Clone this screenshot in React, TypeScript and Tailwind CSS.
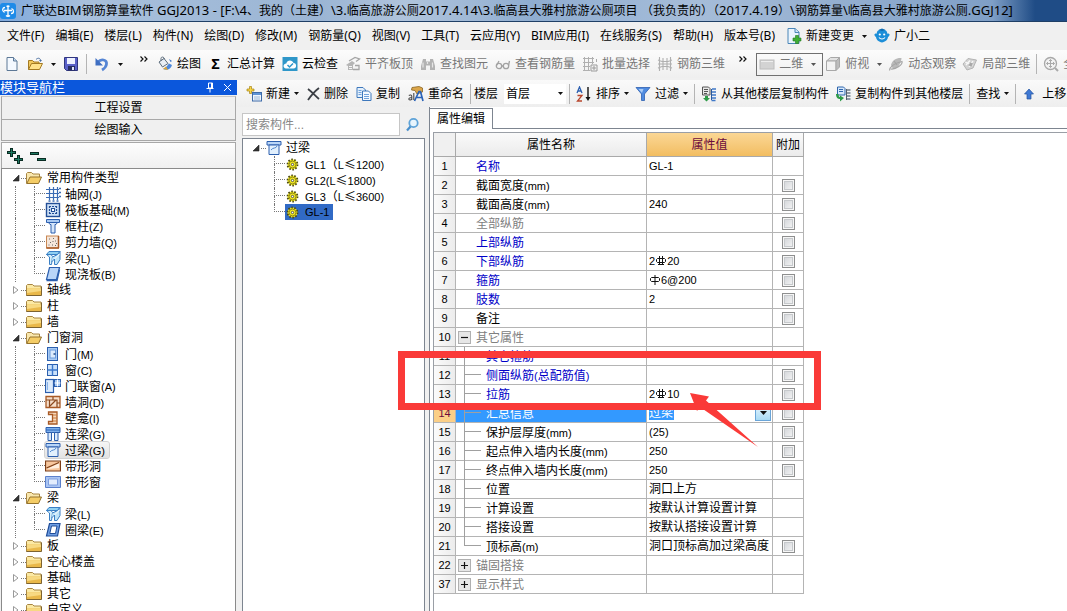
import React, { type ReactNode } from "react";

/* ---------- small building blocks ---------- */

function Mixed({ text, latin = "text-[11px]" }: { text: string; latin?: string }) {
  return (
    <>
      {text.split(/([\x20-\x7e]+)/).map((part, i) =>
        part ? (
          <span key={i} className={i % 2 === 1 ? latin : "[font-family:'Noto_Sans_CJK_SC',sans-serif]"}>
            {part}
          </span>
        ) : null
      )}
    </>
  );
}

function Svg({ children, w = 16, h = 16 }: { children: ReactNode; w?: number; h?: number }) {
  return (
    <svg width={w} height={h} viewBox={`0 0 ${w} ${h}`} className="shrink-0" aria-hidden="true">
      {children}
    </svg>
  );
}

function Caret({ color = "#111" }: { color?: string }) {
  return (
    <Svg w={5} h={3}>
      <path d="M0 0h5L2.5 3z" fill={color} />
    </Svg>
  );
}

function Sep() {
  return <span className="h-5 w-px shrink-0 bg-[#b4b4b4]" />;
}

/* ---------- toolbar icons ---------- */

const AppLogo = () => (
  <Svg>
    <rect width="16" height="16" rx="3" fill="#1e8be8" />
    <path d="M8 2.500v11M4 7.500h8M5 4.500C2.500 4.500 1.500 8 4.500 9.500M11 10.500c3 0 3.500-3.500.5-5M6 12.500c1 1 3 1 4 0M6.500 3.500c1-.8 2-.8 3 0" stroke="#fff" strokeWidth="1.300" fill="none" />
  </Svg>
);
const NewFile = () => (
  <Svg>
    <path d="M3 1.500h6.500l3.500 3.500v9.500H3z" fill="#f4f9ff" stroke="#5d7896" />
    <path d="M9.500 1.500V5H13" fill="#c4d9ef" stroke="#5d7896" />
  </Svg>
);
const OpenFile = () => (
  <Svg>
    <path d="M1.500 13.500V4.500h4l1.500 1.500h5v2" fill="#f2c95d" stroke="#a47a22" />
    <path d="M1.500 13.500L4.500 7.500h11l-3 6z" fill="#ffe28a" stroke="#a47a22" />
    <path d="M9 3.500c2-2 4-1.500 4.500.5" fill="none" stroke="#4a6ea0" />
    <path d="M12 4h3l-1.500 2z" fill="#4a6ea0" />
  </Svg>
);
const Save = () => (
  <Svg>
    <path d="M1.500 1.500h13v13h-11l-2-2z" fill="#5a61c8" stroke="#30367f" />
    <rect x="4" y="2" width="8" height="6" fill="#eef1ff" />
    <rect x="5" y="10" width="7" height="4.500" fill="#272d62" />
    <rect x="9" y="11" width="2" height="3" fill="#dfe3f8" />
  </Svg>
);
const Undo = () => (
  <Svg>
    <path d="M4 6C7 2.500 13 3.500 12.500 8c-.2 2.500-2 4.500-4.500 6" fill="none" stroke="#5585d4" strokeWidth="2.800" />
    <path d="M1.500 2v7.500H9z" fill="#3f6fc2" />
  </Svg>
);
const Paint = () => (
  <Svg>
    <path d="M2 6l5-3.500L11 7.500 5.500 11z" fill="#e8eef4" stroke="#5b6b7b" />
    <path d="M4 5V2.500C4 0.500 7 .5 7.500 3" fill="none" stroke="#5b6b7b" />
    <path d="M6 13c3-1 4-3 6-5.500l3 1.500c-1 4-5 6-9 4z" fill="#4c88dc" />
    <path d="M6 13l3-2.500 2 3.500z" fill="#d8a53c" />
    <path d="M12 3l1.500 3 1.500-1z" fill="#3f73c4" />
  </Svg>
);
const CloudCheck = () => (
  <Svg>
    <rect x=".5" y="1" width="15" height="14" fill="#2f97c9" />
    <path d="M4 12.500c-3.500-.5-3-5 .3-5C5 3.500 10.500 3.500 11.500 7c3.500 0 3.500 5.500 0 5.500z" fill="#fff" />
    <path d="M5.500 9l2 2 3.500-3.500" fill="none" stroke="#2f97c9" strokeWidth="1.500" />
  </Svg>
);
const AlignSlab = () => (
  <Svg>
    <path d="M1 9l6-4 3 2-2 2v5H3v-4z" fill="#b5b5b5" />
    <path d="M4 5l6-3.500L14.500 3 11 5.500M10 9.500h4v4h-6" fill="none" stroke="#a5a5a5" strokeWidth="1.300" />
    <path d="M4 10.500h3M4 12.500h3" stroke="#f5f5f5" />
  </Svg>
);
const Binoculars = () => (
  <Svg>
    <path d="M3 3h3v2.500h4V3h3l2 7v4h-5V9.500H6V14H1v-4z" fill="#b3b3b3" />
    <path d="M3 6.500v5M12.500 6.500v5M7.500 6v2" stroke="#e6e6e6" strokeWidth="1.200" />
  </Svg>
);
const Glasses = () => (
  <Svg>
    <circle cx="4" cy="10" r="2.700" fill="none" stroke="#a3a3a3" strokeWidth="1.300" />
    <circle cx="11" cy="10" r="2.700" fill="none" stroke="#a3a3a3" strokeWidth="1.300" />
    <path d="M6.500 10h2M1.500 9.500L4 5M13.500 9.500L14.500 5" fill="none" stroke="#a3a3a3" strokeWidth="1.300" />
  </Svg>
);
const BatchSelect = () => (
  <Svg>
    <path d="M1 2.500h11M1 6.500h11M1 10.500h7M1 14.500h7M2.500 1v14M6.500 1v14M10.500 1v7" stroke="#b0b0b0" />
    <path d="M9 9h6v6H9zM11 11h2v2h-2z" fill="none" stroke="#999" />
    <path d="M14.500 3v3" stroke="#aaa" />
  </Svg>
);
const Rebar3d = () => (
  <Svg>
    <path d="M1 4l4 1.500h6L15 4M1 8h14M1 12l4-1.500h6l4 1.500M2.500 1v14M6 2v12M10 2v12M13.500 1v14" fill="none" stroke="#b0b0b0" strokeWidth="1.100" />
  </Svg>
);
const Plane2d = () => (
  <Svg>
    <rect x="1" y="4" width="14" height="9" fill="#d3d3d3" stroke="#bcbcbc" />
    <path d="M2 5.500h12" stroke="#eee" />
  </Svg>
);
const Cube = () => (
  <Svg>
    <path d="M1.500 5l4-3.500h9L11 5z" fill="#e2e2e2" stroke="#a8a8a8" />
    <path d="M1.500 5H11v9.500H1.500z" fill="#f2f2f2" stroke="#a8a8a8" />
    <path d="M11 5l3.500-3.500V11L11 14.500z" fill="#bcbcbc" stroke="#a8a8a8" />
  </Svg>
);
const Orbit = () => (
  <Svg>
    <path d="M3 9C4 4 9 1.500 13.500 2 13 8 10 12 5 13z" fill="#b9b9b9" />
    <path d="M1.500 14.500C2 9 8 7 14 5.500c1 3-6 8-11 7.500M6 5l3 4" fill="none" stroke="#a5a5a5" strokeWidth="1.200" />
  </Svg>
);
const Part3d = () => (
  <Svg>
    <path d="M1 8l5-5.500L14.500 4l-3.500 8-6 2z" fill="#d2d2d2" stroke="#b4b4b4" />
    <path d="M4 9l4-4.500M7 11l4-6M3 6l8 3" stroke="#f8f8f8" strokeWidth="1.300" />
    <path d="M8 6.500l3 1-1.500 3-3-1z" fill="#a8a8a8" />
  </Svg>
);
const ZoomAll = () => (
  <Svg>
    <circle cx="7.500" cy="7.500" r="6" fill="#f2f2f2" stroke="#a8a8a8" strokeWidth="1.300" />
    <path d="M7.500 3.500v8M3.500 7.500h8M6 5l1.500-1.500L9 5M6 10l1.500 1.500L9 10M5 6L3.500 7.500 5 9M10 6l1.500 1.500L10 9" fill="none" stroke="#aaa" />
    <path d="M12 12l3 3" stroke="#aaa" strokeWidth="2" />
  </Svg>
);
const NewChange = () => (
  <Svg>
    <path d="M2 .5h7L13 4v11.500H2z" fill="#eaf4fd" stroke="#4b86b8" />
    <path d="M9 .5V4.500h4" fill="#cfe4f5" stroke="#4b86b8" />
    <path d="M9.500 7.500h3v2.500H15v3h-2.500v2.500h-3V13H7v-3h2.500z" fill="#3eae35" stroke="#23781e" strokeWidth=".6" />
  </Svg>
);
const Mascot = () => (
  <Svg>
    <path d="M8 1.500c5 0 5.500 3 5 4 3-.5 3.500 2 1 3.500C13.800 12 11 14 8 14.500 5 14 2.200 12 2 9-.5 7.500 0 5 3 5.500 2.500 4.500 3 1.500 8 1.500z" fill="#1c8ed8" />
    <path d="M4.500 2l3.500 1 3.500-1-3.500-1.500z" fill="#0f6db3" />
    <circle cx="5.800" cy="6.500" r="1.100" fill="#fff" />
    <circle cx="10.200" cy="6.500" r="1.100" fill="#fff" />
    <path d="M5 9.500c1.500 2 4.500 2 6 0" fill="none" stroke="#fff" strokeWidth="1.100" />
  </Svg>
);
const NewItem = () => (
  <Svg>
    <rect x="6.500" y="6.500" width="9" height="8.500" fill="#eef5fd" stroke="#3e6ba8" />
    <rect x="7" y="7" width="8" height="2" fill="#5e93d6" />
    <path d="M8 11h6M8 13h6" stroke="#9db8d8" />
    <path d="M3.500 .5h2v2.500H8v2H5.500V7.500h-2V5H1V3h2.500z" fill="#f8d648" stroke="#a88416" strokeWidth=".7" />
  </Svg>
);
const Cross = () => (
  <Svg w={13} h={14}>
    <path d="M1 2c4 3 7 6.500 11 10M12 1C8 4 4.500 8 1 13" fill="none" stroke="#3b3f45" strokeWidth="1.800" />
  </Svg>
);
const Copy = () => (
  <Svg>
    <path d="M1 1.500h6L9.500 4v7.500H1z" fill="#e4f0fc" stroke="#3e78bc" />
    <path d="M6.500 5h6L15 7.500v7H6.500z" fill="#f3f9ff" stroke="#3e78bc" />
    <path d="M2.500 4.500h3M2.500 6.500h3M2.500 8.500h3M8 8.500h5M8 10.500h5M8 12.500h5" stroke="#6fa2dc" />
  </Svg>
);
const Rename = () => (
  <Svg>
    <path d="M4 1.500l7-1L14.500 2v4L9 8 7 4.500 3.500 4z" fill="#dca64a" stroke="#8a6423" strokeWidth=".8" />
    <path d="M6.500 15l4.500-9.500h1.500L15 15M9 11.500h4.500" fill="none" stroke="#2a63b8" strokeWidth="1.700" />
    <path d="M.8 9.500c1.500-1 3-.5 3 1V14M3.800 11.500C2 11.500.8 12 .8 13s2 1.500 3 0M5.800 7v7" fill="none" stroke="#4a4a4a" strokeWidth="1.100" />
  </Svg>
);
const SortAz = () => (
  <Svg>
    <path d="M1 7L3.500 1 6 7M2 5h3" fill="none" stroke="#2c5fb0" strokeWidth="1.300" />
    <path d="M1.500 9.500H6L1.500 15H6" fill="none" stroke="#b8452d" strokeWidth="1.300" />
    <path d="M12 1v12" stroke="#111" strokeWidth="1.400" />
    <path d="M9.500 11h5L12 15z" fill="#111" />
  </Svg>
);
const Filter = () => (
  <Svg>
    <path d="M1 1.500h14L9.500 8v6.500h-3V8z" fill="#4f8be0" stroke="#2d5fb0" strokeWidth=".8" />
    <path d="M3.500 3h5L7 7z" fill="#a9cbf5" />
  </Svg>
);
const CopyFrom = () => (
  <Svg>
    <path d="M1.500 1h6L9 2.500V9H1.500z" fill="#e8e8e8" stroke="#555" />
    <path d="M3 3.500h4M3 5.500h4M3 7.500h3" stroke="#555" />
    <path d="M11 3h4M11 6h4M11 9h4M11 12h4M10.500 14.500h4" stroke="#3f78c8" strokeWidth="1.600" />
    <path d="M10.500 3v11" stroke="#2b5a9e" />
    <path d="M4 10h3v2h2l-3.500 3.500L2 12h2z" fill="#2e9b48" />
  </Svg>
);
const CopyTo = () => (
  <Svg>
    <path d="M2.500 1h6L10 2.500V9H2.500z" fill="#d7e8fb" stroke="#2f66ad" />
    <path d="M4 3.500h4M4 5.500h4" stroke="#2f66ad" />
    <path d="M12 4h3.500M12 7h3.500M12 10h3.500M12 13h3.500" stroke="#6d7b8b" strokeWidth="1.600" />
    <path d="M11.500 3v11" stroke="#55606c" />
    <path d="M1 8c0 4 2 5 4 5v2.500L9 12 5 9.500V11c-1 0-1.500-1-1.500-3z" fill="#2e9b48" />
  </Svg>
);
const ArrowUp = () => (
  <Svg w={10} h={12}>
    <path d="M5 1l4.500 5H7v5H3V6H.5z" fill="#3f79d4" stroke="#24539f" strokeWidth=".7" />
  </Svg>
);

/* ---------- tree icons ---------- */

const FolderClosed = () => (
  <Svg>
    <path d="M.5 13.500V3.500l1-1h5l1.500 1.500h7v9.500z" fill="#fbe9a4" stroke="#a88643" />
    <path d="M1 6.500h14v7H1z" fill="#e9b84a" />
    <path d="M1 6.500h14v2.500L1 11z" fill="#f7d982" />
    <path d="M.5 13.500h15V4.500" fill="none" stroke="#7d6330" />
  </Svg>
);
const FolderOpen = () => (
  <Svg>
    <path d="M.5 13.500V3.500l1-1h4L7 4h6.500v3" fill="#f9e7ae" stroke="#a88643" />
    <path d="M.8 13.500L4 7h11.500l-3 6.500z" fill="#f4cc66" stroke="#94732f" />
  </Svg>
);
const blue = "#2c5fae";
const brown = "#a95a26";
const AxisGrid = () => (
  <Svg>
    <path d="M4.500 1v13M8.500 1v13M12.500 1v13M1 3.500h13M1 7.500h13M1 11.500h13" stroke="#3b6cb4" strokeWidth="1.200" />
    <path d="M14 2.500h2M14 6.500h2M14 10.500h2M3.500 15h2M7.500 15h2M11.500 15h2" stroke="#3b6cb4" strokeWidth="1.500" />
  </Svg>
);
const Raft = () => (
  <Svg>
    <rect x="1.500" y="1.500" width="13" height="13" fill="#cfe1f7" stroke="#234f97" strokeWidth="1.400" />
    <path d="M4 4.500h8M4 11.500h8M4.500 4v8M11.500 4v8" stroke="#234f97" strokeWidth="1.200" strokeDasharray="2 1" />
    <rect x="6.500" y="6.500" width="3" height="3" fill="#fff" stroke="#234f97" />
  </Svg>
);
const Column = () => (
  <Svg>
    <path d="M1.500 1.500h13v3h-13z" fill="#a9c9f2" stroke={blue} />
    <path d="M3.500 4.500h9l-1.500 2h-1v8.500H6V6.500H5z" fill="#d5e6fb" stroke={blue} />
  </Svg>
);
const ShearWall = () => (
  <Svg>
    <rect x="1.500" y="2" width="12" height="12" fill="#f5e6da" stroke="#c98752" />
    <path d="M13.500 2v12M1.500 14H14" stroke={brown} strokeWidth="1.500" />
    <path d="M4 5h1M8 4.500h1M10 7h1M5 8.500h1M3.500 11h1M7 11h1M10 11.500h1M11 9.500h1M7.500 7.500h1" stroke="#6d6a68" />
  </Svg>
);
const Beam = () => (
  <Svg>
    <path d="M1.500 4.500L4 1.500h11L12.500 4.500z" fill="#8fd0f2" stroke="#3a7fc4" />
    <path d="M1.500 4.500h4.500l1.500 2-1 8H4.500V7z" fill="#d5effb" stroke="#3a7fc4" />
    <path d="M7.500 7l5-2.500L15 1.500v8l-3 5H9.500V9l-3 3" fill="#bfe4f8" stroke="#3a7fc4" />
    <path d="M9.500 9l5-5" stroke="#fff" />
  </Svg>
);
const Slab = () => (
  <Svg>
    <path d="M4.500 1.500h10l-3 12h-10z" fill="#b9d5f8" stroke={blue} strokeWidth="1.200" />
    <path d="M1.500 14.500h10.500l2.500-11" fill="none" stroke={blue} strokeWidth="1.400" />
  </Svg>
);
const Door = () => (
  <Svg>
    <rect x="2.500" y="1.500" width="10" height="13" fill="#a9cbf4" stroke={blue} />
    <rect x="5" y="4" width="5.500" height="8" fill="#dcebfc" stroke="#6a9bdd" />
    <path d="M8.500 8h2" stroke="#173f80" strokeWidth="1.400" />
  </Svg>
);
const Window = () => (
  <Svg>
    <rect x="2.500" y="2.500" width="10" height="11" fill="#cbe2fb" stroke={blue} />
    <path d="M7.500 2.500v11M2.500 8h10" stroke="#3d78cc" strokeWidth="1.400" />
  </Svg>
);
const DoorWindow = () => (
  <Svg>
    <rect x=".5" y="1.500" width="8" height="13" fill="#dcebfc" stroke={blue} strokeWidth="1.200" />
    <rect x="9.500" y="1.500" width="6" height="7" fill="#a9cbf4" stroke={blue} />
    <path d="M12.500 1.500v7M9.500 5h6" stroke="#fff" />
    <path d="M2.500 4v8" stroke="#8ab3e8" />
  </Svg>
);
const WallHole = () => (
  <Svg>
    <path d="M1 2.500h14v11H1z" fill="#f6dfcb" stroke={brown} strokeWidth="1.300" />
    <path d="M4.500 13V6h7.500v7M5 12l6-6M1 6h3M12 9h3M8 3v3" fill="none" stroke="#8b4a20" strokeWidth="1.200" />
  </Svg>
);
const Niche = () => (
  <Svg>
    <path d="M3.500 2h8.500v12H3.500v-2.500h4v-7h-4z" fill="#f7d9bc" stroke={brown} strokeWidth="1.300" />
    <path d="M8 5h4M8 8h4M8 11h4" stroke="#c97b3c" />
  </Svg>
);
const LinkBeam = () => (
  <Svg>
    <path d="M1 1.500h14v5H1z" fill="#7eb0ec" stroke={blue} />
    <path d="M3 6.500h3.500v8H3zM9.500 6.500H13v8H9.500z" fill="#d9eafd" stroke={blue} />
    <path d="M1 4h14" stroke="#2a64b8" />
  </Svg>
);
const Lintel = () => (
  <Svg>
    <path d="M1 1.500h14v3.500H1z" fill="#b9d6f8" stroke={blue} />
    <path d="M3 5h10v9.500H3z" fill="#e2f0fd" stroke={blue} />
    <path d="M5 10c2-3 5-1 6-4" fill="none" stroke="#4d86cf" />
  </Svg>
);
const StripHole = () => (
  <Svg>
    <path d="M.5 3h15v10H.5z" fill="#f7c79e" stroke="#7d3f18" strokeWidth="1.200" />
    <path d="M2 11L14 5v5z" fill="#fff0e0" />
    <path d="M1.500 10L14 4.500" stroke="#7d3f18" strokeWidth="1.300" />
  </Svg>
);
const StripWindow = () => (
  <Svg>
    <path d="M.5 2.500h15v11H.5z" fill="#a9c4f2" stroke="#5b80cc" />
    <path d="M3.500 5h9v6h-9z" fill="#e3edfd" stroke="#7e9fe0" />
  </Svg>
);
const RingBeam = () => (
  <Svg>
    <path d="M4.500 1.500h10.500l-2.500 12.500H1.500z" fill="#6f9fe4" stroke="#1f4c98" strokeWidth="1.200" />
    <path d="M6.500 4h5.500l-1.500 7.500H4.800z" fill="#fff" stroke="#1f4c98" />
  </Svg>
);
const Gear = () => (
  <Svg w={13} h={13}>
    <circle cx="6.500" cy="6.500" r="5" fill="#f6ee1e" stroke="#4d4a10" strokeWidth="1.800" strokeDasharray="1.600 1.500" />
    <circle cx="6.500" cy="6.500" r="3.400" fill="#f6ee1e" stroke="#77701a" strokeWidth=".8" />
    <circle cx="6.500" cy="6.500" r="1.200" fill="#fff" stroke="#333" strokeWidth=".8" />
  </Svg>
);

function Expander({ open }: { open: boolean }) {
  return (
    <Svg w={8} h={10}>
      {open ? (
        <path d="M7 2v6H1z" fill="#333" stroke="#222" strokeWidth=".6" />
      ) : (
        <path d="M1.500 1.500v7L6 5z" fill="#fff" stroke="#999" />
      )}
    </Svg>
  );
}

/* ---------- header rows ---------- */

const menus = [
  "文件(F)", "编辑(E)", "楼层(L)", "构件(N)", "绘图(D)", "修改(M)", "钢筋量(Q)", "视图(V)",
  "工具(T)", "云应用(Y)", "BIM应用(I)", "在线服务(S)", "帮助(H)", "版本号(B)",
];

function ToolButton({ icon, label, caret, muted }: { icon?: ReactNode; label: string; caret?: boolean; muted?: boolean }) {
  return (
    <button type="button" className={muted ? "flex shrink-0 items-center gap-1 text-[#777]" : "flex shrink-0 items-center gap-1 text-black"}>
      {icon}
      <span>{label}</span>
      {caret && <Caret color={muted ? "#777" : "#111"} />}
    </button>
  );
}

function IconButton({ icon, label, caret }: { icon: ReactNode; label: string; caret?: boolean }) {
  return (
    <button type="button" aria-label={label} className="flex shrink-0 items-center gap-2">
      {icon}
      {caret && <Caret />}
    </button>
  );
}

function More() {
  return (
    <button type="button" aria-label="更多" className="flex h-5 shrink-0 items-start pt-[2px]">
      <Svg w={8} h={6}>
        <path d="M.5 .5L3 3 .5 5.500M4.500 .5L7 3 4.500 5.500" fill="none" stroke="#111" strokeWidth="1.200" />
      </Svg>
    </button>
  );
}

function MainToolbar() {
  return (
    <div className="flex h-7 shrink-0 items-center overflow-hidden bg-linear-to-b from-[#fcfcfc] to-[#efefef] pl-1">
      <div className="flex shrink-0 items-center gap-[7px]">
        <IconButton icon={<NewFile />} label="新建" />
        <IconButton icon={<OpenFile />} label="打开" caret />
        <IconButton icon={<Save />} label="保存" />
        <Sep />
        <IconButton icon={<Undo />} label="撤销" caret />
      </div>
      <div className="mr-[9px] ml-[17px] flex">
        <More />
      </div>
      <div className="flex shrink-0 items-center gap-[7px]">
        <ToolButton icon={<Paint />} label="绘图" />
        <ToolButton icon={<span className="w-[15px] text-center text-[14px] font-bold">Σ</span>} label="汇总计算" />
        <ToolButton icon={<CloudCheck />} label="云检查" />
        <ToolButton icon={<AlignSlab />} label="平齐板顶" muted />
        <ToolButton icon={<Binoculars />} label="查找图元" muted />
        <ToolButton icon={<Glasses />} label="查看钢筋量" muted />
        <ToolButton icon={<BatchSelect />} label="批量选择" muted />
        <ToolButton icon={<Rebar3d />} label="钢筋三维" muted />
      </div>
      <div className="mr-[9px] ml-[14px] flex">
        <More />
      </div>
      <div className="flex shrink-0 items-center gap-[2px]">
        <button type="button" className="flex h-[23px] items-center gap-1 border border-[#707070] px-[2px] text-[#777]">
          <Plane2d />
          <span>二维</span>
          <span className="px-1">
            <Caret color="#555" />
          </span>
        </button>
        <button type="button" className="flex items-center gap-1 text-[#777]">
          <Cube />
          <span>俯视</span>
          <span className="px-1">
            <Caret color="#555" />
          </span>
        </button>
      </div>
      <div className="ml-[2px] flex shrink-0 items-center gap-[6px]">
        <ToolButton icon={<Orbit />} label="动态观察" muted />
        <ToolButton icon={<Part3d />} label="局部三维" muted />
        <Sep />
        <ToolButton icon={<ZoomAll />} label="全屏" muted />
      </div>
    </div>
  );
}

function ComponentToolbar() {
  return (
    <div className="flex h-[27px] shrink-0 items-center overflow-hidden bg-linear-to-b from-[#fafafa] to-[#eeeeee] pl-[9px]">
      <div className="flex shrink-0 items-center gap-2">
        <ToolButton icon={<NewItem />} label="新建" caret />
        <ToolButton icon={<Cross />} label="删除" />
        <ToolButton icon={<Copy />} label="复制" />
        <ToolButton icon={<Rename />} label="重命名" />
      </div>
      <div className="mx-[6px] flex shrink-0 items-center gap-[3px]">
        <Sep />
        <label htmlFor="floor">楼层</label>
        <div className="ml-[3px] grid w-[62px] items-center">
          <select id="floor" className="col-start-1 row-start-1 h-5 appearance-none bg-white pl-[2px] outline-none">
            <option>首层</option>
          </select>
          <span className="pointer-events-none col-start-1 row-start-1 mr-[3px] justify-self-end">
            <Caret />
          </span>
        </div>
        <Sep />
      </div>
      <div className="flex shrink-0 items-center gap-[6px]">
        <ToolButton icon={<SortAz />} label="排序" caret />
        <ToolButton icon={<Filter />} label="过滤" caret />
        <Sep />
        <ToolButton icon={<CopyFrom />} label="从其他楼层复制构件" />
        <ToolButton icon={<CopyTo />} label="复制构件到其他楼层" />
        <Sep />
        <ToolButton label="查找" caret />
        <Sep />
        <button type="button" className="flex shrink-0 items-center gap-2 pl-[2px]">
          <ArrowUp />
          <span>上移</span>
        </button>
      </div>
    </div>
  );
}

/* ---------- module navigation ---------- */

type Leaf = { label: string; icon: ReactNode; active?: boolean };
type Group = { label: string; items?: Leaf[] };

const groups: Group[] = [
  {
    label: "常用构件类型",
    items: [
      { label: "轴网(J)", icon: <AxisGrid /> },
      { label: "筏板基础(M)", icon: <Raft /> },
      { label: "框柱(Z)", icon: <Column /> },
      { label: "剪力墙(Q)", icon: <ShearWall /> },
      { label: "梁(L)", icon: <Beam /> },
      { label: "现浇板(B)", icon: <Slab /> },
    ],
  },
  { label: "轴线" },
  { label: "柱" },
  { label: "墙" },
  {
    label: "门窗洞",
    items: [
      { label: "门(M)", icon: <Door /> },
      { label: "窗(C)", icon: <Window /> },
      { label: "门联窗(A)", icon: <DoorWindow /> },
      { label: "墙洞(D)", icon: <WallHole /> },
      { label: "壁龛(I)", icon: <Niche /> },
      { label: "连梁(G)", icon: <LinkBeam /> },
      { label: "过梁(G)", icon: <Lintel />, active: true },
      { label: "带形洞", icon: <StripHole /> },
      { label: "带形窗", icon: <StripWindow /> },
    ],
  },
  {
    label: "梁",
    items: [
      { label: "梁(L)", icon: <Beam /> },
      { label: "圈梁(E)", icon: <RingBeam /> },
    ],
  },
  { label: "板" },
  { label: "空心楼盖" },
  { label: "基础" },
  { label: "其它" },
  { label: "自定义" },
];

function Branch({ last }: { last: boolean }) {
  return (
    <span className="flex h-4 w-[11px] shrink-0 flex-col">
      <span className="h-2 border-b border-l border-dotted border-[#777]" />
      <span className={last ? "h-2" : "h-2 border-l border-dotted border-[#777]"} />
    </span>
  );
}

function ModuleTree() {
  return (
    <ul className="min-h-0 flex-1 overflow-hidden border-x border-t border-[#8a8a8a] bg-white pt-px">
      {groups.map((group) => (
        <li key={group.label}>
          <div className="flex h-4 items-center pl-[10px]">
            <Expander open={!!group.items} />
            <span className="ml-px w-[5px] border-b border-dotted border-[#777]" />
            <span className="flex">{group.items ? <FolderOpen /> : <FolderClosed />}</span>
            <span className="ml-[5px]">{group.label}</span>
          </div>
          {group.items && (
            <ul>
              {group.items.map((leaf, i) => (
                <li key={leaf.label} className="flex h-4 items-center pl-[13px]">
                  <span className="h-4 w-[19px] shrink-0 border-l border-dotted border-[#777]" />
                  <Branch last={i === group.items!.length - 1} />
                  <span
                    className={
                      leaf.active
                        ? "flex h-4 items-center gap-1 rounded-xs bg-linear-to-b from-[#f6f6f6] to-[#e2e2e2] pr-1 outline outline-[#d2d2d2]"
                        : "flex h-4 items-center gap-1"
                    }
                  >
                    {leaf.icon}
                    <span>
                      <Mixed text={leaf.label} />
                    </span>
                  </span>
                </li>
              ))}
            </ul>
          )}
        </li>
      ))}
    </ul>
  );
}

function ModuleNav() {
  return (
    <aside className="flex w-[237px] shrink-0 flex-col bg-[#f0f0f0]">
      <div className="flex h-[15px] shrink-0 items-center bg-[#0b57dc] text-white">
        <h2 className="flex-1 text-[13px] leading-[15px]">模块导航栏</h2>
        <button type="button" aria-label="固定" className="mr-2 flex">
          <Svg w={10} h={11}>
            <path d="M3.500 1h4v5h-4zM6.500 1v5M1.500 6.500h7M5 7v3.500" fill="none" stroke="#fff" />
          </Svg>
        </button>
        <button type="button" aria-label="关闭" className="mr-[5px] flex">
          <Svg w={9} h={9}>
            <path d="M1 1l7 7M8 1L1 8" stroke="#fff" />
          </Svg>
        </button>
      </div>
      <div className="mt-px mr-px flex min-h-0 flex-1 flex-col pl-px">
        <button type="button" className="h-6 shrink-0 border border-[#a8a8a8] border-t-[#c8c8c8] bg-[#f0f0f0]">工程设置</button>
        <button type="button" className="h-[21px] shrink-0 border border-t-0 border-[#a8a8a8] bg-[#f0f0f0]">绘图输入</button>
        <div className="mt-px flex h-[26px] shrink-0 items-center gap-[7px] border-x border-t border-[#a8a8a8] bg-linear-to-b from-[#fdfdfd] to-[#f0f0f0] pl-[5px]">
          <button type="button" aria-label="全部展开" className="flex">
            <Svg>
              <path d="M4.500 0v9M0 4.500h9M11.500 7v9M7 11.500h9" stroke="#0a2b22" strokeWidth="3" />
              <path d="M4.500 1v7M1 4.500h7M11.500 8v7M8 11.500h7" stroke="#1d7a62" />
            </Svg>
          </button>
          <button type="button" aria-label="全部折叠" className="flex">
            <Svg>
              <path d="M0 5.500h9M7 11.500h9" stroke="#0a2b22" strokeWidth="3" />
              <path d="M1 5.500h7M8 11.500h7" stroke="#1d7a62" />
            </Svg>
          </button>
        </div>
        <ModuleTree />
      </div>
    </aside>
  );
}

/* ---------- component list ---------- */

const components = ["GL1（L≤1200)", "GL2(L≤1800)", "GL3（L≤3600)", "GL-1"];

function ComponentList() {
  return (
    <section className="flex w-[188px] shrink-0 flex-col pt-[6px] pl-[5px]">
      <div className="flex h-[25px] shrink-0 items-start">
        <input
          type="text"
          aria-label="搜索构件"
          placeholder="搜索构件..."
          className="h-[23px] w-[158px] border border-[#c6c6c6] bg-white px-[3px] placeholder:text-[#888] outline-none"
        />
        <button type="button" aria-label="搜索" className="ml-[5px] mt-1 flex">
          <Svg>
            <circle cx="8.500" cy="6" r="4.200" fill="#e8f5fd" stroke="#5fa3d8" strokeWidth="1.800" />
            <path d="M5.500 9.500L2 13.500" stroke="#4a90cc" strokeWidth="2.200" />
          </Svg>
        </button>
      </div>
      <ul className="min-h-0 flex-1 border border-b-0 border-[#7d8590] bg-white pt-px">
        <li>
          <div className="flex h-4 items-center pl-[9px]">
            <Expander open />
            <span className="ml-px w-[5px] border-b border-dotted border-[#777]" />
            <Lintel />
            <span className="ml-1">过梁</span>
          </div>
          <ul>
            {components.map((name, i) => {
              const active = i === components.length - 1;
              return (
                <li key={name} className="flex h-4 items-center pl-[31px]">
                  <Branch last={active} />
                  <span className={active ? "flex h-4 items-center gap-[6px] bg-[#316ac5] pr-1" : "flex h-4 items-center gap-[6px]"}>
                    <span className="flex w-[14px] justify-end">
                      <Gear />
                    </span>
                    <span>
                      <Mixed text={name} />
                    </span>
                  </span>
                </li>
              );
            })}
          </ul>
        </li>
      </ul>
    </section>
  );
}

/* ---------- property table ---------- */

function Bar({ ribs }: { ribs: boolean }) {
  return (
    <svg width="12" height="12" viewBox="0 0 12 12" className="inline-block align-[-2px]" role="img" aria-label="钢筋直径">
      <path d="M2.500 3.500h7l1 1v2l-1 1h-7l-1-1v-2z" fill="none" stroke="#111" />
      {ribs ? <path d="M4.500 1v9M7.500 1v9M3 9.500h6" stroke="#111" fill="none" /> : <path d="M6 1v10" stroke="#111" />}
    </svg>
  );
}

type Row = {
  no: number;
  name: string;
  kind?: "key" | "group" | "muted";
  child?: boolean;
  last?: boolean;
  value?: ReactNode;
  check?: boolean;
  open?: boolean;
  current?: boolean;
};

const rows: Row[] = [
  { no: 1, name: "名称", kind: "key", value: <Mixed text="GL-1" /> },
  { no: 2, name: "截面宽度(mm)", check: true },
  { no: 3, name: "截面高度(mm)", value: <Mixed text="240" />, check: true },
  { no: 4, name: "全部纵筋", kind: "muted", check: true },
  { no: 5, name: "上部纵筋", kind: "key", check: true },
  { no: 6, name: "下部纵筋", kind: "key", value: <><Mixed text="2" /><Bar ribs /><Mixed text="20" /></>, check: true },
  { no: 7, name: "箍筋", kind: "key", value: <><Bar ribs={false} /><Mixed text="6@200" /></>, check: true },
  { no: 8, name: "肢数", kind: "key", value: <Mixed text="2" />, check: true },
  { no: 9, name: "备注", check: true },
  { no: 10, name: "其它属性", kind: "group", open: true },
  { no: 11, name: "其它箍筋", kind: "key", child: true },
  { no: 12, name: "侧面纵筋(总配筋值)", kind: "key", child: true, check: true },
  { no: 13, name: "拉筋", kind: "key", child: true, value: <><Mixed text="2" /><Bar ribs /><Mixed text="10" /></>, check: true },
  { no: 14, name: "汇总信息", child: true, current: true, check: true },
  { no: 15, name: "保护层厚度(mm)", child: true, value: <Mixed text="(25)" />, check: true },
  { no: 16, name: "起点伸入墙内长度(mm)", child: true, value: <Mixed text="250" />, check: true },
  { no: 17, name: "终点伸入墙内长度(mm)", child: true, value: <Mixed text="250" />, check: true },
  { no: 18, name: "位置", child: true, value: "洞口上方" },
  { no: 19, name: "计算设置", child: true, value: "按默认计算设置计算" },
  { no: 20, name: "搭接设置", child: true, value: "按默认搭接设置计算" },
  { no: 21, name: "顶标高(m)", child: true, last: true, value: "洞口顶标高加过梁高度", check: true },
  { no: 22, name: "锚固搭接", kind: "group" },
  { no: 37, name: "显示样式", kind: "group" },
];

function nameColor(row: Row) {
  if (row.current) return "text-white";
  if (row.kind === "key") return "text-[#0000c8]";
  if (row.kind) return "text-[#808080]";
  return "text-black";
}

function NameCell({ row }: { row: Row }) {
  return (
    <div className="flex h-[18px] items-center">
      {row.kind === "group" ? (
        <button
          type="button"
          aria-label={row.open ? "收起" : "展开"}
          className="mr-[5px] ml-[2px] flex border border-[#b0b0b0] bg-[#e6e6e6]"
        >
          <Svg w={11} h={11}>
            <path d={row.open ? "M2 5.500h7" : "M2 5.500h7M5.500 2v7"} stroke="#111" strokeWidth="1.200" />
          </Svg>
        </button>
      ) : row.child ? (
        <span className="mr-[5px] ml-2 flex h-full w-[17px] flex-col">
          <span className="h-[9px] border-b border-l border-[#a0a0a0]" />
          <span className={row.last ? "flex-1" : "-mb-px flex-1 border-l border-[#a0a0a0]"} />
        </span>
      ) : (
        <span className="w-5" />
      )}
      <span className={nameColor(row)}>
        <Mixed text={row.name} />
      </span>
    </div>
  );
}

const th = "h-6 border-r border-b border-[#a9a9a9] p-0 font-normal";

function PropertyTable() {
  return (
    <table className="w-[370px] table-fixed border-separate border-spacing-0 [font-family:'Liberation_Sans','Noto_Sans_CJK_SC',sans-serif]">
      <colgroup>
        <col className="w-[22px]" />
        <col className="w-[191px]" />
        <col className="w-[126px]" />
        <col className="w-[31px]" />
      </colgroup>
      <thead>
        <tr>
          <th className={`${th} bg-[#f0f0f0]`} aria-label="序号" />
          <th className={`${th} bg-linear-to-b from-[#fafafa] to-[#ebebeb]`}>属性名称</th>
          <th className={`${th} bg-linear-to-b from-[#fbd795] to-[#f2bd60] text-[#6b0a3c]`}>属性值</th>
          <th className={`${th} bg-linear-to-b from-[#fafafa] to-[#ebebeb]`}>附加</th>
        </tr>
      </thead>
      <tbody>
        {rows.map((row) => (
          <tr key={row.no}>
            <td
              className={
                row.current
                  ? "h-[19px] border-r border-b border-[#b4b4b4] bg-[#fbcf87] p-0 text-center text-[11px] text-[#6b0a3c]"
                  : "h-[19px] border-r border-b border-[#b4b4b4] bg-linear-to-r from-[#fbfbfb] to-[#ececec] p-0 text-center text-[11px]"
              }
            >
              {row.no}
            </td>
            <td className={row.current ? "border-r border-b border-[#b4b4b4] bg-[#3399ff] p-0" : "border-r border-b border-[#b4b4b4] bg-white p-0"}>
              <NameCell row={row} />
            </td>
            <td className="border-r border-b border-[#b4b4b4] bg-white p-0">
              {row.current ? (
                <div className="flex h-[18px] items-center justify-between pl-[2px]">
                  <input
                    type="text"
                    role="combobox"
                    aria-label="汇总信息"
                    aria-expanded="false"
                    aria-controls="summary"
                    defaultValue="过梁"
                    className="h-[14px] w-[25px] bg-[#3399ff] text-white outline-none"
                  />
                  <button id="summary" type="button" aria-label="选择" className="mr-px flex h-4 w-4 items-center justify-center border border-[#6aa5d8] bg-linear-to-b from-[#e3f4fd] to-[#a9daf5]">
                    <Svg w={7} h={4}>
                      <path d="M0 0h7L3.500 4z" fill="#111" />
                    </Svg>
                  </button>
                </div>
              ) : (
                <div className="h-[18px] pl-[2px] leading-[18px] whitespace-nowrap">{row.value}</div>
              )}
            </td>
            <td className="border-r border-b border-[#b4b4b4] bg-white p-0">
              {row.check && (
                <div className="flex h-[18px] items-center justify-center">
                  <input
                    type="checkbox"
                    aria-label={`附加 ${row.name}`}
                    className="size-[13px] appearance-none border border-[#8e8f8f] bg-linear-to-br from-[#cfd2d6] to-[#f8f8f8] shadow-[inset_0_0_0_1px_#f6f6f6,inset_0_0_0_2px_#c6c9cc]"
                  />
                </div>
              )}
            </td>
          </tr>
        ))}
      </tbody>
    </table>
  );
}

function Annotation() {
  return (
    <div className="pointer-events-none absolute top-[218px] left-[-36px] z-10 h-[59px] w-[423px] border-[7px] border-[#fa3a38]" aria-hidden="true">
      <svg width="72" height="58" viewBox="0 0 72 58" className="absolute top-[33px] left-[284px]">
        <path d="M1 2L20 5.500 17 9.500 69 56 11 16 8 20z" fill="#fa3a38" />
      </svg>
    </div>
  );
}

function PropertyPanel() {
  return (
    <section className="ml-1 flex min-w-0 flex-1 flex-col border-l border-[#7d8590] bg-white pt-px">
      <div className="flex h-[21px] shrink-0" role="tablist">
        <button type="button" role="tab" aria-selected="true" className="w-[63px] border-t border-r border-[#7d8590] bg-white text-center">
          属性编辑
        </button>
        <span className="flex-1 border-b border-[#7d8590]" />
      </div>
      <div className="mt-[3px] ml-[3px] flex-1 border-t border-l border-[#9a9fa6]">
        <div className="relative w-[370px]">
          <PropertyTable />
          <Annotation />
        </div>
      </div>
    </section>
  );
}

const title =
  "广联达BIM钢筋算量软件 GGJ2013 - [F:\\4、我的（土建）\\3.临高旅游公厕2017.4.14\\3.临高县大雅村旅游公厕项目 （我负责的）（2017.4.19）\\钢筋算量\\临高县大雅村旅游公厕.GGJ12]";

export default function App() {
  return (
    <div className="flex h-screen flex-col overflow-hidden bg-[#f0f0f0] text-[12px] leading-4 whitespace-nowrap text-black [font-family:'Noto_Sans','Noto_Sans_CJK_SC',sans-serif]">
      <header className="flex h-[22px] shrink-0 items-center gap-[5px] overflow-hidden border-b border-[#1f3f66] bg-[linear-gradient(to_right,#7fa9dc_0%,#a8c0dc_8%,#9bb5d4_30%,#b0c4dc_38%,#8fadd0_50%,#a6bdd9_65%,#8ba8cb_85%,#7f9fc6_93%,#1f4c86_97%)]">
        <AppLogo />
        <h1>
          <Mixed text={title} latin="text-[13px]" />
        </h1>
      </header>
      <nav className="flex h-7 shrink-0 items-center gap-[11px] overflow-hidden bg-[#f0f0f0] pl-[7px]">
        {menus.map((m) => (
          <button key={m} type="button" className="shrink-0">
            {m}
          </button>
        ))}
        <button type="button" className="flex shrink-0 items-center gap-1">
          <NewChange />
          <span>新建变更</span>
          <span className="pl-1">
            <Caret />
          </span>
        </button>
        <button type="button" className="-ml-1 flex shrink-0 items-center gap-1">
          <Mascot />
          <span>广小二</span>
        </button>
      </nav>
      <MainToolbar />
      <div className="mt-[2px] flex min-h-0 flex-1">
        <div className="flex [font-family:'Liberation_Sans','Noto_Sans_CJK_SC',sans-serif]">
          <ModuleNav />
        </div>
        <div className="flex min-w-0 flex-1 flex-col">
          <ComponentToolbar />
          <div className="flex min-h-0 flex-1">
            <div className="flex [font-family:'Liberation_Sans','Noto_Sans_CJK_SC',sans-serif]">
              <ComponentList />
            </div>
            <PropertyPanel />
          </div>
        </div>
      </div>
    </div>
  );
}
